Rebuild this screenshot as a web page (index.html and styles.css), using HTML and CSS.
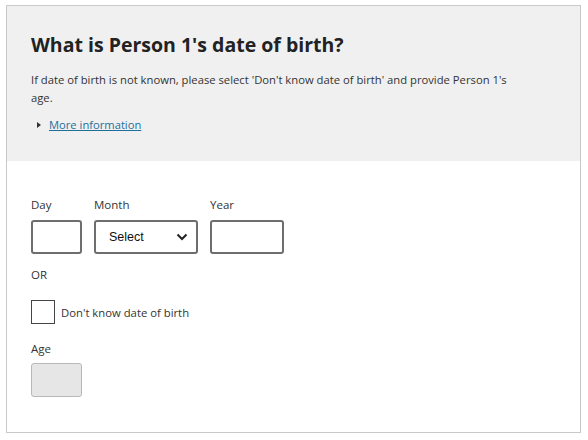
FILE: index.html
```html
<!DOCTYPE html>
<html lang="en">
<head>
<meta charset="utf-8">
<link rel="stylesheet" href="styles.css">
</head>
<body>
<div class="card">
  <div class="header">
    <h1 class="title">What is Person 1's date of birth?</h1>
    <p class="hint">If date of birth is not known, please select 'Don't know date of birth' and provide Person 1's age.</p>
    <div class="details"><span class="arrow"></span><a class="link" href="#">More information</a></div>
  </div>
  <div class="body">
    <div class="date-row">
      <div class="field">
        <label class="label">Day</label>
        <div class="input day"></div>
      </div>
      <div class="field">
        <label class="label">Month</label>
        <div class="input select"><span class="select-text">Select</span>
          <svg class="chev" width="12" height="8" viewBox="0 0 12 8"><path d="M1.5 1.5 L6 6 L10.5 1.5" fill="none" stroke="#222" stroke-width="2"/></svg>
        </div>
      </div>
      <div class="field">
        <label class="label">Year</label>
        <div class="input year"></div>
      </div>
    </div>
    <div class="or">OR</div>
    <div class="check-row"><span class="checkbox"></span><span class="check-label">Don't know date of birth</span></div>
    <div class="label age-label">Age</div>
    <div class="input day disabled"></div>
  </div>
</div>
</body>
</html>
```
FILE: styles.css
```css
html, body { margin: 0; padding: 0; background: #fff; }
body { font-family: "Open Sans", "Noto Sans", sans-serif; color: #2b2b2b; }
.card {
  margin: 5px 0 0 6px;
  width: 575px;
  height: 428px;
  box-sizing: border-box;
  border: 1px solid #c9c9c9;
}
.header {
  background: #f0f0f0;
  height: 155px;
  box-sizing: border-box;
  padding: 25px 24px 0 24px;
}
.title {
  margin: 0;
  font-size: 19.5px;
  font-weight: 700;
  line-height: 28px;
  color: #222;
}
.hint {
  margin: 12px 0 0 0;
  font-size: 11.25px;
  line-height: 18px;
  width: 490px;
  color: #333;
}
.details {
  margin-top: 9px;
  display: flex;
  align-items: center;
  font-size: 11.2px;
  line-height: 18px;
}
.arrow {
  width: 0; height: 0;
  border-top: 3.5px solid transparent;
  border-bottom: 3.5px solid transparent;
  border-left: 4px solid #333;
  margin: 0 8px 0 6px;
}
.link { color: #1f6f9a; text-decoration: underline; }
.body { padding: 36px 24px 0 24px; }
.date-row { display: flex; gap: 12px; }
.field { display: flex; flex-direction: column; }
.label { font-size: 11.5px; line-height: 16px; color: #333; margin-bottom: 7px; }
.input {
  box-sizing: border-box;
  height: 34px;
  border: 2px solid #6e6e6e;
  border-radius: 3px;
  background: #fff;
}
.day { width: 51px; }
.year { width: 74px; }
.select {
  width: 104px;
  display: flex;
  align-items: center;
  justify-content: space-between;
  padding: 0 8px 0 13px;
}
.select-text { font-family: "Liberation Sans", Arial, sans-serif; font-size: 12.5px; color: #111; }
.or { font-size: 11.5px; line-height: 16px; margin-top: 13px; color: #333; }
.check-row { display: flex; align-items: center; gap: 6px; margin-top: 17px; }
.checkbox { width: 24px; height: 24px; box-sizing: border-box; border: 1px solid #444; background: #fff; }
.check-label { font-size: 11.3px; color: #333; }
.age-label { margin-top: 17px; margin-bottom: 6px; }
.disabled { background: #e6e6e6; border: 1px solid #b8b8b8; }
```
